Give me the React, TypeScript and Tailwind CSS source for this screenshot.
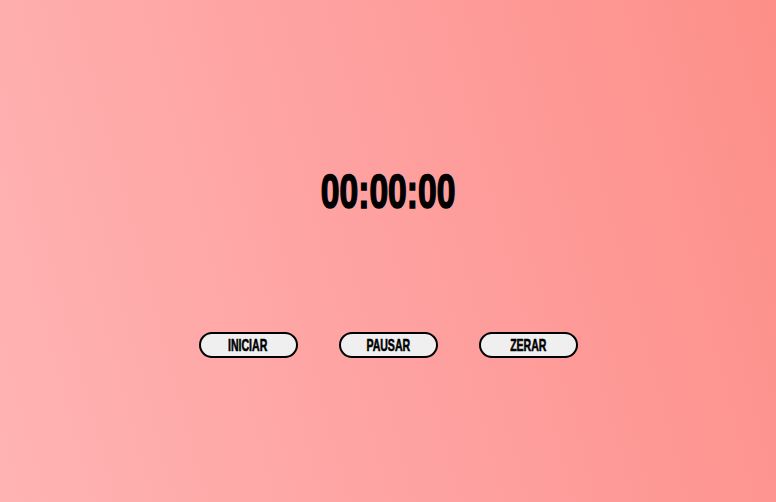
import React from "react";

export default function App() {
  const btn =
    "w-[99px] h-[26px] rounded-full border-2 border-black bg-[#efefef] text-black flex items-center justify-center";
  const label =
    "inline-block scale-x-[0.62] text-[17px] font-bold leading-none pt-[1px] [-webkit-text-stroke:0.6px_black]";
  return (
    <div
      className="w-[776px] h-[502px] bg-[linear-gradient(75deg,#ffb3b3_0%,#fea1a0_50%,#fd8f88_100%)] flex flex-col items-center"
      style={{ fontFamily: '"Liberation Sans", Arial, sans-serif' }}
    >
      <div className="mt-[164px] h-[56px] flex items-center">
        <span className="inline-block scale-x-[0.7] text-[48px] font-bold text-black leading-none [-webkit-text-stroke:1.6px_black]">
          00:00:00
        </span>
      </div>
      <div className="mt-[112px] flex gap-[41px]">
        <button className={btn}><span className={label}>INICIAR</span></button>
        <button className={btn}><span className={label}>PAUSAR</span></button>
        <button className={btn}><span className={label}>ZERAR</span></button>
      </div>
    </div>
  );
}
